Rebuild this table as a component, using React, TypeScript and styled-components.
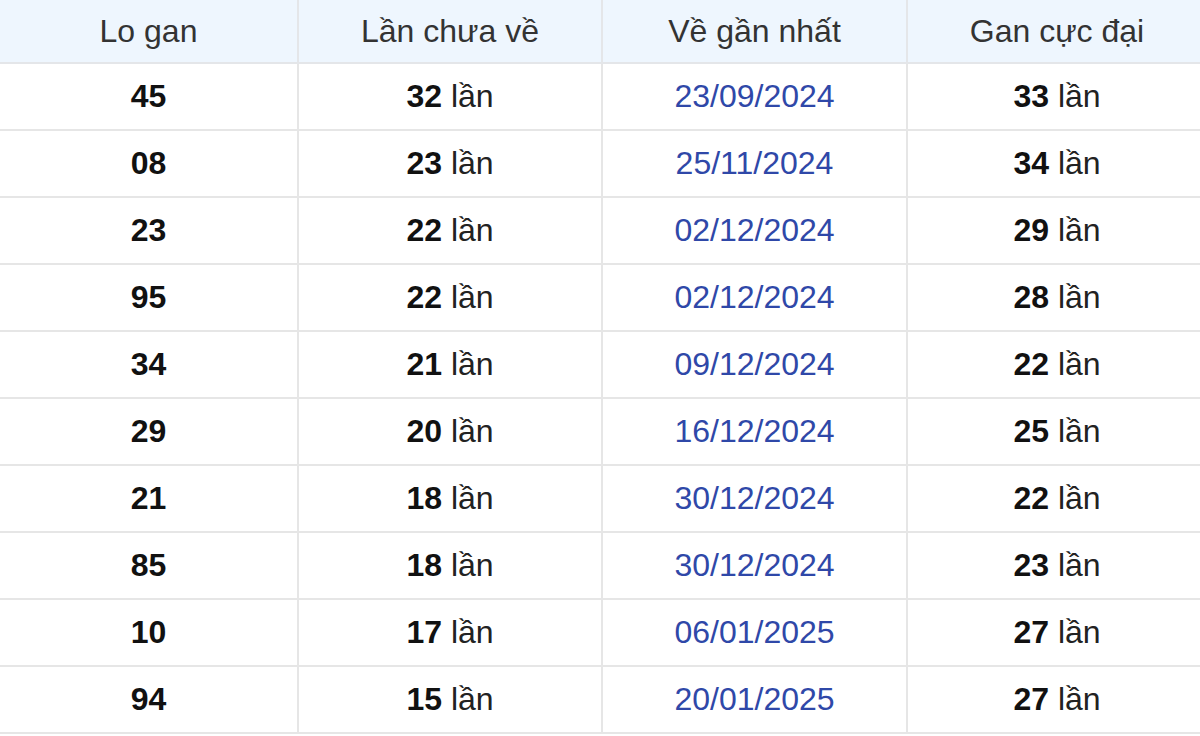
import React from "react";
import styled, { createGlobalStyle } from "styled-components";

const GlobalStyle = createGlobalStyle`
  html, body {
    margin: 0;
    padding: 0;
    background: #ffffff;
    overflow: hidden;
  }
  body {
    font-family: "Liberation Sans", Arial, sans-serif;
  }
`;

const Viewport = styled.div`
  width: 1200px;
  height: 736px;
  overflow: hidden;
`;

const Table = styled.div`
  width: 1206px;
  display: grid;
  grid-template-columns: 299px 304px 305px 298px;
`;

const HeaderCell = styled.div`
  height: 62px;
  background: #eef6fe;
  border-bottom: 2px solid #e4e6e9;
  border-right: 2px solid #e4e6e9;
  display: flex;
  align-items: center;
  justify-content: center;
  font-size: 32px;
  color: #333333;
  &:nth-child(4n) {
    border-right: none;
  }
`;

const Cell = styled.div<{ $last?: boolean }>`
  height: 65px;
  border-bottom: 2px solid #e6e6e6;
  border-right: ${(p) => (p.$last ? "none" : "2px solid #e6e6e6")};
  display: flex;
  align-items: center;
  justify-content: center;
  font-size: 32px;
  color: #222222;
`;

const Num = styled.b`
  font-weight: 700;
  color: #111111;
`;

const DateText = styled.span`
  color: #2f48a8;
`;

const rows: [string, string, string, string][] = [
  ["45", "32", "23/09/2024", "33"],
  ["08", "23", "25/11/2024", "34"],
  ["23", "22", "02/12/2024", "29"],
  ["95", "22", "02/12/2024", "28"],
  ["34", "21", "09/12/2024", "22"],
  ["29", "20", "16/12/2024", "25"],
  ["21", "18", "30/12/2024", "22"],
  ["85", "18", "30/12/2024", "23"],
  ["10", "17", "06/01/2025", "27"],
  ["94", "15", "20/01/2025", "27"],
];

const headers = ["Lo gan", "Lần chưa về", "Về gần nhất", "Gan cực đại"];

export default function App() {
  return (
    <Viewport>
      <GlobalStyle />
      <Table>
        {headers.map((h) => (
          <HeaderCell key={h}>{h}</HeaderCell>
        ))}
        {rows.map(([lo, count, date, max], i) => (
          <React.Fragment key={i}>
            <Cell>
              <Num>{lo}</Num>
            </Cell>
            <Cell>
              <Num>{count}</Num>&nbsp;lần
            </Cell>
            <Cell>
              <DateText>{date}</DateText>
            </Cell>
            <Cell $last>
              <Num>{max}</Num>&nbsp;lần
            </Cell>
          </React.Fragment>
        ))}
      </Table>
    </Viewport>
  );
}
